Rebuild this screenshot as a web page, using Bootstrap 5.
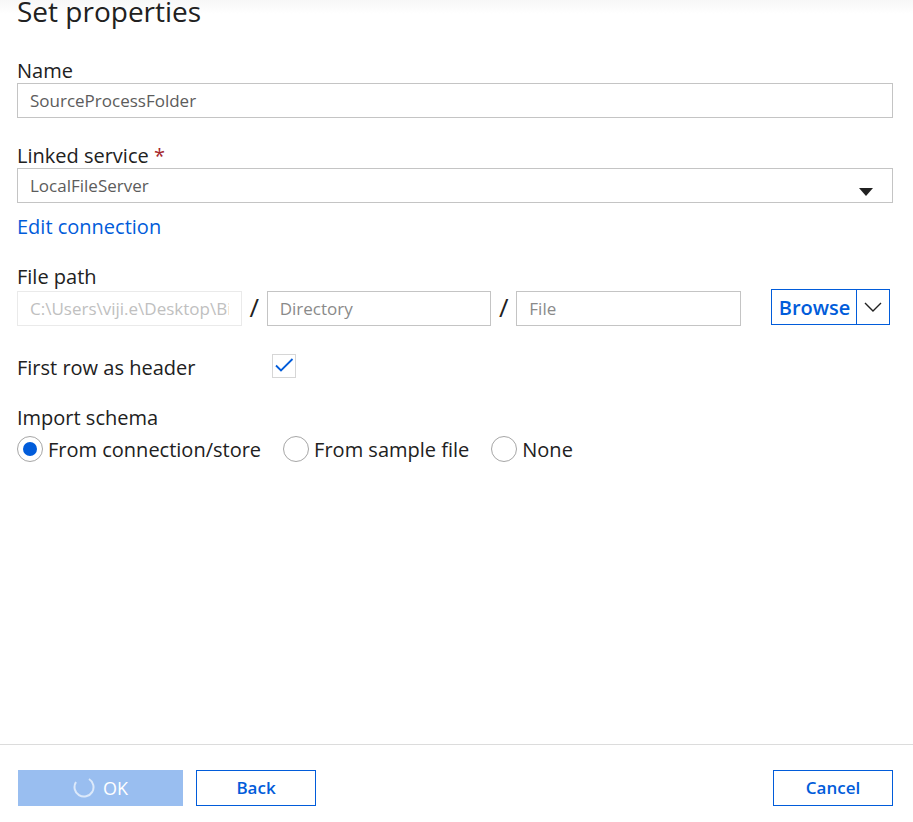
<!DOCTYPE html>
<html lang="en">
<head>
<meta charset="utf-8">
<meta name="viewport" content="width=device-width, initial-scale=1">
<title>Set properties</title>
<link href="https://cdn.jsdelivr.net/npm/bootstrap@5.3.0/dist/css/bootstrap.min.css" rel="stylesheet">
<style>
  :root { --accent: #015cda; --ink: #212121; }
  body { font: 20px/25px "Open Sans", "Noto Sans", sans-serif; color: var(--ink); background: #fff; }
  .panel-body { padding: 0 20px 24px 17px; background: linear-gradient(#f7f7f7, #fff 14px); }
  .panel-title { font-size: 28px; line-height: 23px; font-weight: 400; margin: 0 0 35px; }
  .field-label { display: block; }
  .field-box, .field-box:focus {
    height: 35px; padding: 0 12px; border: 1px solid #c4c4c4; border-radius: 0;
    font-size: 17px; line-height: 33px; color: #5c5c5c; background-color: #fff; box-shadow: none;
  }
  .field-box::placeholder { color: #8a8a8a; }
  .field-box:disabled { border-color: #eaeaea; color: #c0c0c0; background: #fff; opacity: 1; }
  .picker {
    background: #fff url("data:image/svg+xml,%3Csvg xmlns='http://www.w3.org/2000/svg' width='14' height='8'%3E%3Cpath d='M0 0h14L7 8z' fill='%23212121'/%3E%3C/svg%3E") no-repeat right 19px top 19px / 14px 8px;
  }
  .group-gap { margin-top: 25px; }
  .required { color: #a4262c; }
  .edit-link { color: var(--accent); margin-top: 11px; }
  .slash { width: 25px; font-size: 26px; }
  .browse { margin: 0 3px 1px 30px; height: 36px; border: 1px solid var(--accent); }
  .browse button { border: 0; background: #fff; padding: 0; }
  .browse-main { width: 85px; color: var(--accent); font-weight: 600; }
  .browse-more { width: 32px; box-shadow: -1px 0 0 var(--accent); }
  .header-row { margin-top: 28px; }
  .header-label { width: 255px; padding-top: 1px; }
  .tick, .dot { margin: 0 !important; float: none !important; flex: none; background-color: #fff !important; box-shadow: none !important; }
  .tick.form-check-input { width: 24px; height: 24px; border: 1px solid #d6d6d6; border-radius: 0; }
  .tick.form-check-input:checked {
    border-color: #d6d6d6; background-size: 22px 22px;
    background-image: url("data:image/svg+xml,%3Csvg xmlns='http://www.w3.org/2000/svg' viewBox='0 0 22 22'%3E%3Cpath d='M3 10.500l5 5L19.500 4' fill='none' stroke='%23015cda' stroke-width='1.800'/%3E%3C/svg%3E");
  }
  .dot.form-check-input { width: 26px; height: 26px; border: 1px solid #a6a6a6; }
  .dot.form-check-input:checked {
    border-color: #a6a6a6; background-size: 24px 24px;
    background-image: url("data:image/svg+xml,%3Csvg xmlns='http://www.w3.org/2000/svg' viewBox='0 0 24 24'%3E%3Ccircle cx='12' cy='12' r='7' fill='%23015cda'/%3E%3C/svg%3E");
  }
  .choices { margin-top: 5px; gap: 22px; }
  .choice { gap: 5px; }
  .choice label { padding-top: 2px; }
  .panel-footer { border-top: 1px solid #dcdcdc; padding: 25px 20px 16px 18px; gap: 13px; }
  .action { height: 36px; width: 120px; padding: 0; border: 1px solid var(--accent); border-radius: 0; font-size: 17px; line-height: 34px; font-weight: 600; color: var(--accent); background: #fff; }
  .action-ok, .action-ok:disabled { width: 165px; gap: 8px; border: 0; font-size: 18px; font-weight: 400; color: #fff; background: #99bef0; opacity: 1; }
</style>
<script src="https://cdn.jsdelivr.net/npm/bootstrap@5.3.0/dist/js/bootstrap.bundle.min.js" defer></script>
</head>
<body>
<form class="d-flex flex-column min-vh-100">
  <main class="panel-body flex-grow-1">
    <h1 class="panel-title">Set properties</h1>

    <label class="field-label" for="name">Name</label>
    <input class="form-control field-box" id="name" type="text" value="SourceProcessFolder">

    <label class="field-label group-gap" for="service">Linked service <span class="required">*</span></label>
    <select class="form-select field-box picker" id="service" required>
      <option selected>LocalFileServer</option>
    </select>
    <a class="edit-link d-inline-block text-decoration-none" href="#">Edit connection</a>

    <label class="field-label group-gap" for="container">File path</label>
    <div class="d-flex align-items-end">
      <input class="form-control field-box flex-fill w-25" id="container" type="text" value="C:\Users\viji.e\Desktop\BigData" disabled>
      <span class="slash text-center flex-shrink-0 align-self-center">/</span>
      <input class="form-control field-box flex-fill w-25" type="text" placeholder="Directory" aria-label="Directory">
      <span class="slash text-center flex-shrink-0 align-self-center">/</span>
      <input class="form-control field-box flex-fill w-25" type="text" placeholder="File" aria-label="File">
      <div class="browse d-flex flex-shrink-0">
        <button class="browse-main" type="button">Browse</button>
        <button class="browse-more d-flex justify-content-center align-items-center" type="button" aria-label="More browse options">
          <svg width="18" height="10" viewBox="0 0 18 10" fill="none" stroke="#212121" stroke-width="1.4" aria-hidden="true"><path d="M1 1l8 8 8-8"/></svg>
        </button>
      </div>
    </div>

    <div class="header-row d-flex align-items-start">
      <label class="header-label" for="header">First row as header</label>
      <input class="form-check-input tick" id="header" type="checkbox" checked>
    </div>

    <div class="group-gap" id="schema-label">Import schema</div>
    <div class="choices d-flex flex-wrap" role="radiogroup" aria-labelledby="schema-label">
      <div class="choice d-flex align-items-center">
        <input class="form-check-input dot" type="radio" name="schema" id="store" checked>
        <label for="store">From connection/store</label>
      </div>
      <div class="choice d-flex align-items-center">
        <input class="form-check-input dot" type="radio" name="schema" id="sample">
        <label for="sample">From sample file</label>
      </div>
      <div class="choice d-flex align-items-center">
        <input class="form-check-input dot" type="radio" name="schema" id="none">
        <label for="none">None</label>
      </div>
    </div>
  </main>

  <footer class="panel-footer d-flex">
    <button class="btn action action-ok d-flex justify-content-center align-items-center" type="submit" disabled>
      <svg width="22" height="22" viewBox="0 0 22 22" fill="none" stroke="#dce9fa" stroke-width="2" aria-hidden="true"><path d="M3 5A9.500 9.500 0 1 0 16 2"/></svg>
      OK
    </button>
    <button class="btn action" type="button">Back</button>
    <button class="btn action ms-auto" type="button">Cancel</button>
  </footer>
</form>
</body>
</html>
